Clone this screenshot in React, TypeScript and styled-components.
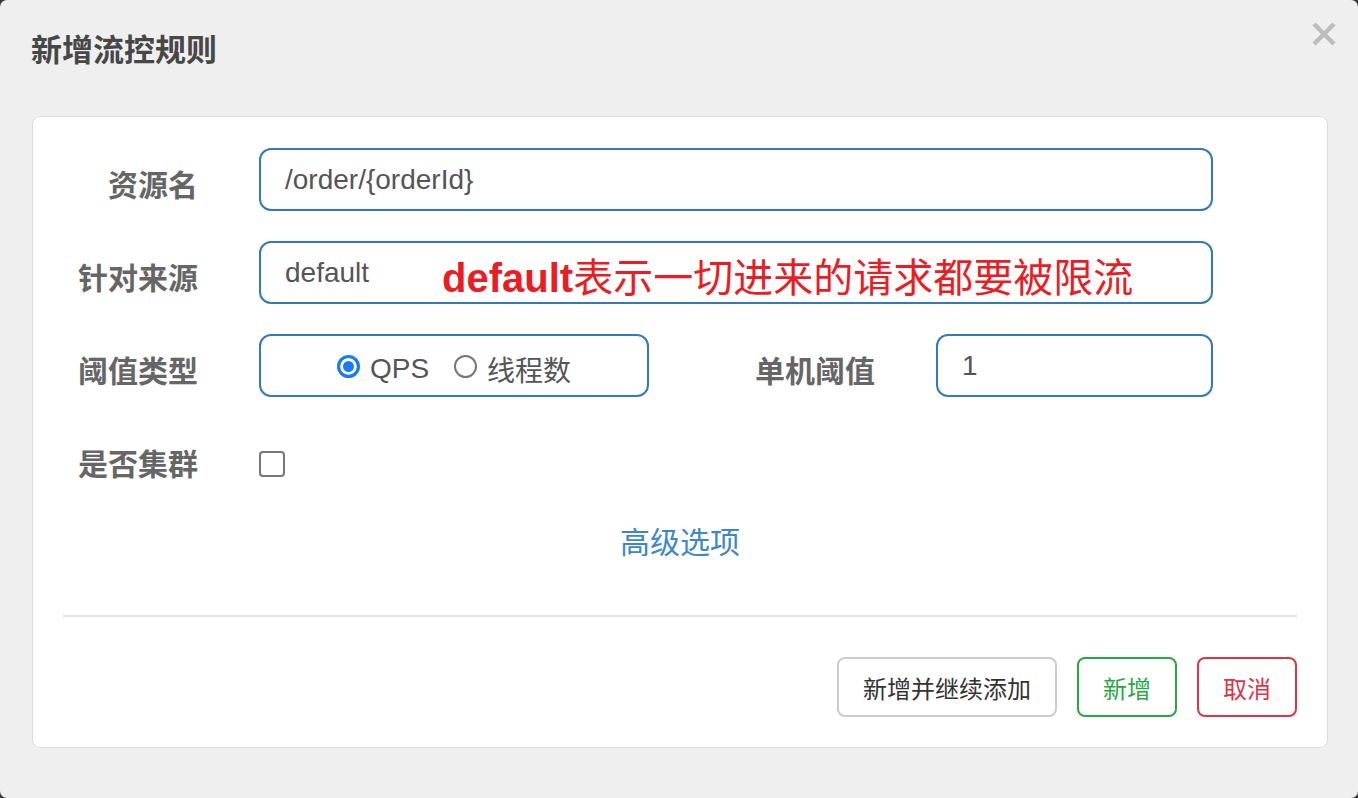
import React from 'react';
import styled, { createGlobalStyle } from 'styled-components';

const GlobalStyle = createGlobalStyle`
  html, body {
    margin: 0;
    padding: 0;
    background: #3a3a3a;
  }
  * {
    box-sizing: border-box;
  }
`;

const FONT = `"Liberation Sans", "Noto Sans CJK SC", sans-serif`;

const Modal = styled.div`
  width: 1358px;
  height: 798px;
  background: #efefef;
  border-radius: 7px;
  font-family: ${FONT};
  display: flex;
  flex-direction: column;
  overflow: hidden;
`;

const Header = styled.div`
  height: 116px;
  padding: 0 20px 0 31px;
  display: flex;
  justify-content: space-between;
  align-items: flex-start;
`;

const Title = styled.h4`
  margin: 33px 0 0;
  font-size: 31px;
  line-height: 36px;
  font-weight: 700;
  color: #474747;
`;

const CloseButton = styled.button`
  margin-top: 20px;
  width: 28px;
  height: 28px;
  padding: 0;
  border: none;
  background: transparent;
  display: flex;
  align-items: center;
  justify-content: center;
`;

const Card = styled.div`
  margin: 0 30px 0 32px;
  height: 632px;
  background: #fff;
  border: 1px solid #dcdcdc;
  border-radius: 8px;
  padding: 31px 0 0;
  display: flex;
  flex-direction: column;
`;

const Form = styled.div`
  display: flex;
  flex-direction: column;
  gap: 30px;
  padding-right: 114px;
`;

const Row = styled.div`
  display: flex;
  align-items: center;
  height: 63px;
  gap: 61px;
`;

const Label = styled.label<{ $width?: number }>`
  width: ${(p) => p.$width ?? 165}px;
  flex: none;
  text-align: right;
  font-size: 30px;
  font-weight: 700;
  color: #666;
  padding-top: 6px;
`;

const Field = styled.div<{ $width?: number }>`
  height: 63px;
  ${(p) => (p.$width ? `width: ${p.$width}px; flex: none;` : 'flex: 1;')}
  border: 2px solid #337ab7;
  border-radius: 12px;
  display: flex;
  align-items: center;
  padding: 0 24px;
  font-size: 28px;
  color: #555;
`;

const Note = styled.span`
  margin-left: 73px;
  margin-top: 4px;
  font-size: 40px;
  color: #ec1c24;
  white-space: nowrap;

  b {
    font-weight: 700;
  }
`;

const RadioGroup = styled(Field)`
  justify-content: center;
  padding: 0;
`;

const RadioOption = styled.span`
  display: inline-flex;
  align-items: center;
  gap: 10px;
  color: #555;
  font-size: 28px;
  margin-top: 6px;
  & + & {
    margin-left: 25px;
  }
`;

const RadioDot = styled.span<{ $checked?: boolean }>`
  width: 23px;
  height: 23px;
  border-radius: 50%;
  flex: none;
  margin-top: -4px;
  border: ${(p) => (p.$checked ? '3px solid #1a7cf5' : '2px solid #777')};
  background: ${(p) => (p.$checked ? '#1a7cf5' : '#fff')};
  box-shadow: ${(p) => (p.$checked ? 'inset 0 0 0 3px #fff' : 'none')};
`;

const CheckBox = styled.span`
  width: 26px;
  height: 26px;
  border: 2px solid #777;
  border-radius: 4px;
  background: #fff;
  margin-top: 10px;
`;

const AdvancedLink = styled.a`
  align-self: center;
  margin-top: 32px;
  font-size: 30px;
  line-height: 42px;
  color: #3d87c8;
  text-decoration: none;
  cursor: pointer;
`;

const Divider = styled.hr`
  margin: 51px 30px 0;
  border: none;
  border-top: 2px solid #e4e4e4;
  height: 0;
`;

const Footer = styled.div`
  display: flex;
  justify-content: flex-end;
  gap: 20px;
  margin: 40px 30px 0;
`;

const Button = styled.button<{ $tone?: 'default' | 'success' | 'danger' }>`
  height: 60px;
  padding: 0 24px;
  min-width: 100px;
  border-radius: 8px;
  background: #fff;
  font-family: ${FONT};
  font-size: 24px;
  border: 2px solid
    ${(p) => (p.$tone === 'success' ? '#28a745' : p.$tone === 'danger' ? '#dc3545' : '#ccc')};
  color: ${(p) => (p.$tone === 'success' ? '#28a745' : p.$tone === 'danger' ? '#dc3545' : '#333')};
`;

const CloseIcon = () => (
  <svg width="26" height="26" viewBox="0 0 26 26">
    <path d="M3 3 L23 23 M23 3 L3 23" stroke="#bdbdbd" strokeWidth="4.5" strokeLinecap="butt" />
  </svg>
);

export default function App() {
  return (
    <>
      <GlobalStyle />
      <Modal>
        <Header>
          <Title>新增流控规则</Title>
          <CloseButton aria-label="close">
            <CloseIcon />
          </CloseButton>
        </Header>
        <Card>
          <Form>
            <Row>
              <Label>资源名</Label>
              <Field>/order/{'{orderId}'}</Field>
            </Row>
            <Row>
              <Label>针对来源</Label>
              <Field>
                default
                <Note>
                  <b>default</b>表示一切进来的请求都要被限流
                </Note>
              </Field>
            </Row>
            <Row>
              <Label>阈值类型</Label>
              <RadioGroup $width={390}>
                <RadioOption>
                  <RadioDot $checked />
                  QPS
                </RadioOption>
                <RadioOption>
                  <RadioDot />
                  线程数
                </RadioOption>
              </RadioGroup>
              <Label $width={165}>单机阈值</Label>
              <Field>1</Field>
            </Row>
            <Row>
              <Label>是否集群</Label>
              <CheckBox />
            </Row>
          </Form>
          <AdvancedLink>高级选项</AdvancedLink>
          <Divider />
          <Footer>
            <Button>新增并继续添加</Button>
            <Button $tone="success">新增</Button>
            <Button $tone="danger">取消</Button>
          </Footer>
        </Card>
      </Modal>
    </>
  );
}
